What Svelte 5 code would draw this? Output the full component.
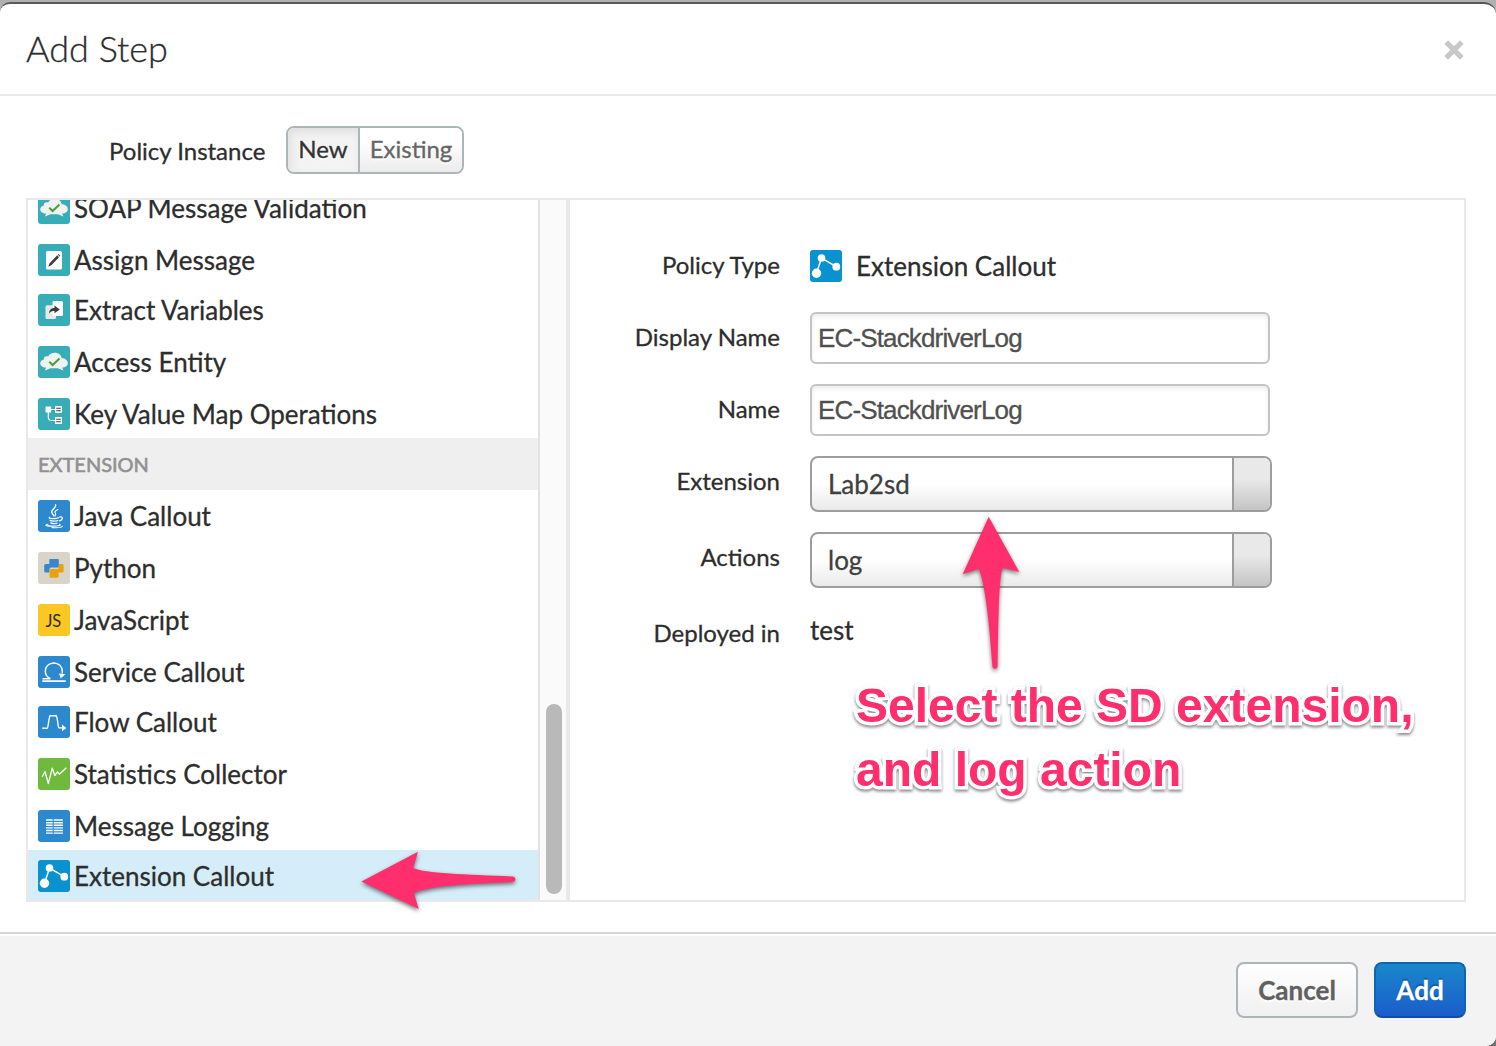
<script>
  const policies = [
    { name: 'SOAP Message Validation', icon: 'cloud', color: 'teal', tall: true },
    { name: 'Assign Message', icon: 'assign', color: 'teal' },
    { name: 'Extract Variables', icon: 'extract', color: 'teal', tall: true },
    { name: 'Access Entity', icon: 'cloud', color: 'teal', tall: true },
    { name: 'Key Value Map Operations', icon: 'kvm', color: 'teal' },
  ];
  const extensions = [
    { name: 'Java Callout', icon: 'java', color: 'blue', tall: true },
    { name: 'Python', icon: 'python', color: 'sand', tall: true },
    { name: 'JavaScript', icon: 'js', color: 'yellow', tall: true },
    { name: 'Service Callout', icon: 'service', color: 'blue' },
    { name: 'Flow Callout', icon: 'flow', color: 'blue', tall: true },
    { name: 'Statistics Collector', icon: 'stats', color: 'green', tall: true },
    { name: 'Message Logging', icon: 'logging', color: 'blue' },
    { name: 'Extension Callout', icon: 'nodes', color: 'azure', selected: true },
  ];
</script>

{#snippet icon(kind, color)}
  <svg class="icon {color}" viewBox="0 0 32 32" width="32" height="32">
    {#if kind === 'cloud'}
      <path fill="#eef2f1" d="M7 24.500L8 21.500C4.500 21.500 2.200 19.800 2.200 17.500C2.200 15.300 4 13.800 5.800 13.500C5.500 11 8 9.800 10.200 10.600C11.200 8 14 6.800 16.800 6.800C20.500 6.800 23.300 9 23.700 12.300C27 12.300 29.800 14.300 29.800 17.300C29.800 19.800 27.500 21.500 24.200 21.500L25.400 24.500L19.800 22.300H12.500Z" />
      <path fill="none" stroke="#4f9d3a" stroke-width="2" d="M11.300 15.800L14.600 19L21.500 12.500" />
    {:else if kind === 'assign'}
      <rect x="8" y="7" width="16" height="18.500" rx="1.500" fill="#fff" />
      <path fill="#3c3c3c" d="M10.300 22.800L11.600 19.200L19.200 11.300L21 13.200L13.300 21.200ZM19.900 10.700L20.600 10L22.300 11.800L21.600 12.500Z" />
    {:else if kind === 'extract'}
      <rect x="7.500" y="11.300" width="10.500" height="13.700" rx="1.500" fill="#e4eaea" />
      <rect x="14.500" y="7" width="10.500" height="15" rx="1.500" fill="#fff" />
      <path fill="#3c3c3c" d="M11 19.500C11.200 15.800 13.500 14 16.500 14V11.600L21.800 15.500L16.500 19.300V17C14 17 12.500 17.500 11 19.500Z" />
    {:else if kind === 'kvm'}
      <path fill="none" stroke="#fff" stroke-width="1.200" d="M12 11.500H18M10.300 14V19Q10.300 22.500 13.500 22.500H18" />
      <rect x="7.500" y="8.500" width="5.600" height="6" fill="#fff" />
      <rect x="17" y="8" width="7" height="7" rx=".8" fill="#fff" />
      <rect x="17" y="19" width="7" height="7" rx=".8" fill="#fff" />
      <path stroke="#3c3c3c" stroke-width="1.100" d="M18.200 10.200H22.800M18.200 12.800H22.800M18.200 21.200H22.800M18.200 23.800H22.800" />
    {:else if kind === 'java'}
      <g fill="none" stroke="#fff" stroke-linecap="round">
        <path stroke-width="1.400" d="M17.500 4.800C19 8 12.500 9.500 13.800 12.500C14.200 13.800 15.300 14.500 16 15.800" />
        <path stroke-width="1.100" d="M19.800 9.500C16.500 11 16.500 12 17.500 13.500C18 14.500 17.500 15.300 17 16" />
        <path stroke-width="1.200" d="M11.500 17.300C9.500 18.800 18 19 20.500 17.800M12 20.300C13.500 21.500 18 21.300 19.800 20.500M12.700 22.800C14 24 17.500 23.800 19.200 23M21.500 17C25.500 16 25 20 21.500 20.800" />
        <path stroke-width="1.100" d="M10 24.200C5 25.300 9.500 26.200 15 26.100C20 26.100 24 25.300 21.500 24.200M14 27.600C19 28 23.500 27.500 24.300 26.300" />
      </g>
    {:else if kind === 'python'}
      <path fill="#3986cf" d="M12.500 7H19.500Q20.800 7 20.800 8.300V15.500H13Q11.500 15.500 11.500 17V20.500H7.500Q6.200 20.500 6.200 19V13.500Q6.200 12 7.500 12H11.300V8.300Q11.300 7 12.500 7Z" />
      <path fill="#e8a20c" d="M21 12H24.300Q25.600 12 25.600 13.500V19Q25.600 20.500 24.300 20.500H20.600V24.500Q20.600 25.800 19.300 25.800H13Q11.600 25.800 11.600 24.500V18.500Q11.600 17 13 17H19.500Q21 17 21 15.500Z" />
    {:else if kind === 'js'}
      <text x="7.400" y="22.500" class="js">JS</text>
    {:else if kind === 'service'}
      <g fill="none" stroke="#fff" stroke-width="1.400">
        <path d="M4.300 25.200H27.800" stroke-width="1.700" />
        <path d="M4.500 22.700H12.300C9 21 7.300 18.300 7.300 15.300C7.300 10.500 11 7 15.800 7C20.600 7 24.300 10.500 24.300 15.300V17.500" />
      </g>
      <path fill="#fff" d="M21 17.500L27.300 18.200L22.800 22.500Z" />
    {:else if kind === 'flow'}
      <path fill="none" stroke="#fff" stroke-width="1.400" d="M4.200 22.200H9.200C10.300 22.200 10.500 13 12 9.800H18.300C20 13 19.800 21.900 21 21.900H24.500" />
      <path fill="#fff" d="M24 18.500L28.300 21.900L24 25.300Z" />
    {:else if kind === 'stats'}
      <path fill="none" stroke="#fff" stroke-width="1.300" stroke-linejoin="round" d="M4.200 18.800L7 13.500L10.300 25.500L14.300 10.200L16.800 17.500L19.500 14L21.500 16.300L28.300 9.800" />
    {:else if kind === 'logging'}
      <path stroke="#fff" stroke-width="1.400" d="M8 10H14.700M8 12.700H14.700M8 15.300H14.700M8 17.900H14.700M8 20.500H14.700M8 23.100H14.700M15.700 10H24.900M15.700 12.700H24.900M15.700 15.300H24.900M15.700 17.900H24.900M15.700 20.500H24.900M15.700 23.100H24.900" />
    {:else if kind === 'nodes'}
      <path fill="none" stroke="#fff" stroke-width="1.500" d="M6.500 23.300L11.500 8L26.300 16.700" />
      <circle cx="11.500" cy="8" r="3.800" fill="#fff" />
      <circle cx="6.500" cy="23.300" r="4.700" fill="#fff" />
      <circle cx="26.300" cy="16.700" r="3.900" fill="#fff" />
    {/if}
  </svg>
{/snippet}

{#snippet row(item)}
  <li class="row" class:tall={item.tall} class:selected={item.selected}>
    {@render icon(item.icon, item.color)}
    <span>{item.name}</span>
  </li>
{/snippet}

<div class="backdrop">
  <div class="dialog">
    <header>
      <h1>Add Step</h1>
      <svg class="close" viewBox="0 0 20 20" width="20" height="20"><path d="M2.200 2.200L17.800 17.800M17.800 2.200L2.200 17.800" stroke="#c8c8c8" stroke-width="5.200" /></svg>
    </header>

    <div class="instance">
      <span class="instance-label">Policy Instance</span>
      <div class="toggle">
        <button class="active">New</button>
        <button>Existing</button>
      </div>
    </div>

    <div class="panel">
      <div class="list">
        <ul>
          {#each policies as item}{@render row(item)}{/each}
          <li class="section">EXTENSION</li>
          {#each extensions as item}{@render row(item)}{/each}
        </ul>
      </div>
      <div class="track"><div class="thumb"></div></div>
      <div class="form">
        <div class="field type">
          <span class="label">Policy Type</span>
          <div class="value">{@render icon('nodes', 'azure')}<span class="type-name">Extension Callout</span></div>
        </div>
        <div class="field input-field">
          <span class="label">Display Name</span>
          <div class="input">EC-StackdriverLog</div>
        </div>
        <div class="field input-field">
          <span class="label">Name</span>
          <div class="input">EC-StackdriverLog</div>
        </div>
        <div class="field select-field">
          <span class="label">Extension</span>
          <div class="select"><span>Lab2sd</span><i></i></div>
        </div>
        <div class="field select-field">
          <span class="label">Actions</span>
          <div class="select"><span>log</span><i></i></div>
        </div>
        <div class="field deployed">
          <span class="label">Deployed in</span>
          <span class="env">test</span>
        </div>
      </div>
    </div>

    <footer>
      <button class="cancel">Cancel</button>
      <button class="add">Add</button>
    </footer>
  </div>

  <svg class="arrows" viewBox="0 0 1496 1046" width="1496" height="1046">
    <path d="M361.500 881.500L418 851.800L413.300 868C425 873.500 465 874.500 513 876.400Q515.500 877 515.500 879.300T513 882C465 884 428 886 414 893.300L418.700 909Z" />
    <path d="M988.700 516.700L1019.300 572L1002.700 567.700C998.500 580 998.500 620 997.600 666Q997.400 668.700 995 668.700T992.400 666C989 620 985 583 978.700 568.700L962.700 574.300Z" />
  </svg>
  <div class="note"><div>Select the SD extension,</div><div>and log action</div></div>
</div>

<style>
  :global(body) { margin: 0; overflow: hidden; }
  .backdrop {
    position: relative;
    box-sizing: border-box;
    width: 1496px;
    height: 1046px;
    overflow: hidden;
    padding-top: 2px;
    background: linear-gradient(#b0b0b0 50%, #707070 50%);
    font-family: Lato, sans-serif;
    color: #2d2d2d;
  }
  .dialog {
    box-sizing: border-box;
    height: 1044px;
    display: flex;
    flex-direction: column;
    border-top: 2px solid #58595b;
    border-radius: 10px 12px 10px 0;
    background: #fff;
    overflow: hidden;
    -webkit-text-stroke: .3px currentColor;
  }
  header {
    box-sizing: border-box;
    height: 92px;
    flex: none;
    display: flex;
    align-items: center;
    justify-content: space-between;
    padding: 0 32px 0 26px;
    border-bottom: 2px solid #eaeaea;
  }
  h1 { margin: 0; padding-bottom: 2px; font-size: 36px; font-weight: 300; line-height: 44px; }
  .close { display: block; margin-top: 1px; }
  .instance {
    flex: none;
    height: 102px;
    display: flex;
    padding: 30px 0 0 109px;
    box-sizing: border-box;
  }
  .instance-label { width: 177px; font-size: 24px; line-height: 50px; white-space: nowrap; }
  .toggle {
    display: flex;
    box-sizing: border-box;
    width: 178px;
    height: 48px;
    border: 2px solid #acb6b9;
    border-radius: 8px;
    overflow: hidden;
  }
  button { font-family: inherit; padding: 0; margin: 0; border: 0; }
  .toggle button {
    flex: 1;
    font-size: 24px;
    line-height: 42px;
    padding-bottom: 2px;
    color: #666;
    background: linear-gradient(#fff 30%, #ebebeb);
    text-shadow: 0 2px 2px #fff;
    white-space: nowrap;
  }
  .toggle .active {
    flex: none;
    width: 72px;
    box-sizing: border-box;
    border-right: 2px solid #acb6b9;
    color: #333;
    background: #f3f3f3;
    box-shadow: inset 3px 4px 8px #dedede;
  }
  .panel {
    flex: none;
    display: flex;
    box-sizing: border-box;
    width: 1440px;
    height: 704px;
    margin-left: 26px;
    border: 2px solid #e9e9e9;
  }
  .list { width: 510px; height: 700px; overflow: hidden; border-right: 2px solid #e2e2e2; }
  ul { list-style: none; margin: -18px 0 0; padding: 0; }
  .row {
    display: flex;
    align-items: flex-start;
    box-sizing: border-box;
    height: 50px;
    padding: 10px 0 0 10px;
    font-size: 26px;
    line-height: 32px;
    gap: 4px;
    white-space: nowrap;
  }
  .row.tall { height: 52px; }
  .selected { background: #d5edf8; }
  .section {
    height: 52px;
    padding-left: 10px;
    font-size: 20px;
    line-height: 52px;
    color: #919191;
    background: #efefef;
    -webkit-text-stroke-width: .6px;
  }
  .icon { display: block; flex: none; border-radius: 3px; -webkit-text-stroke-width: 0; }
  .teal { background: #36adb7; }
  .blue { background: #2c89ce; }
  .sand { background: #d8d4c8; }
  .yellow { background: #fac723; }
  .green { background: #6dba3c; }
  .azure { background: #0991d0; }
  .js { font: 16.500px Lato, sans-serif; fill: #2d2d2d; }
  .track {
    width: 26px;
    display: flex;
    flex-direction: column;
    justify-content: flex-end;
    align-items: center;
    box-sizing: border-box;
    padding: 0 0 6px 2px;
    background: #fafafa;
  }
  .thumb { width: 16px; height: 190px; border-radius: 8px; background: #b9b9b9; }
  .form { flex: 1; border-left: 4px solid #e9e9e9; padding-top: 40px; }
  .field { display: flex; }
  .label {
    width: 210px;
    margin-right: 30px;
    text-align: right;
    font-size: 24px;
    line-height: 50px;
    white-space: nowrap;
  }
  .type { height: 72px; }
  .value { display: flex; padding-top: 10px; gap: 14px; }
  .type-name { font-size: 26px; line-height: 32px; }
  .input-field { height: 72px; }
  .input {
    box-sizing: border-box;
    width: 460px;
    height: 52px;
    padding-left: 6px;
    border: 2px solid #c4c4c4;
    border-radius: 6px;
    box-shadow: inset 0 3px 4px #eee;
    font: 26px/48px "Liberation Sans", sans-serif;
    letter-spacing: -.85px;
    color: #505050;
  }
  .select-field { height: 76px; }
  .select {
    display: flex;
    justify-content: space-between;
    box-sizing: border-box;
    width: 462px;
    height: 56px;
    border: 2px solid #9d9d9d;
    border-radius: 8px;
    background: linear-gradient(#fff 50%, #eaeaea);
    overflow: hidden;
    font-size: 26px;
    line-height: 52px;
    color: #404040;
  }
  .select span { padding-left: 16px; }
  .select i { width: 36px; border-left: 2px solid #9d9d9d; background: linear-gradient(#e9e9e9 40%, #c4c4c4); }
  .env { font-size: 26px; line-height: 44px; }
  footer {
    flex: 1;
    display: flex;
    justify-content: flex-end;
    align-items: flex-start;
    gap: 16px;
    margin-top: 30px;
    padding: 28px 30px 0 0;
    border-top: 2px solid #d6d6d6;
    background: #f3f3f3;
    box-shadow: inset 0 2px #fff;
  }
  footer button { box-sizing: border-box; height: 56px; border-radius: 8px; font-size: 26px; font-weight: 700; }
  .cancel {
    width: 122px;
    border: 2px solid #acb6b9;
    color: #606060;
    background: linear-gradient(#fff, #f0f0f0);
    text-shadow: 0 2px 2px #fff;
  }
  .add {
    width: 92px;
    border: 2px solid #1463b0;
    border-bottom-color: #164ba3;
    color: #fff;
    background: linear-gradient(#1a87cb, #1a5dcb);
    text-shadow: 0 -2px 1px #19539b;
  }
  .arrows { position: absolute; left: 0; top: 0; fill: #ff2f6d; filter: drop-shadow(0 2px 2px #0008); }
  .note {
    position: absolute;
    left: 856px;
    top: 674px;
    font: 700 48px/64px "Liberation Sans", sans-serif;
    color: #ff2f6d;
    -webkit-text-stroke: 7px #fff;
    paint-order: stroke fill;
    filter: drop-shadow(0 2px 1.500px #0007);
    white-space: nowrap;
  }
</style>
